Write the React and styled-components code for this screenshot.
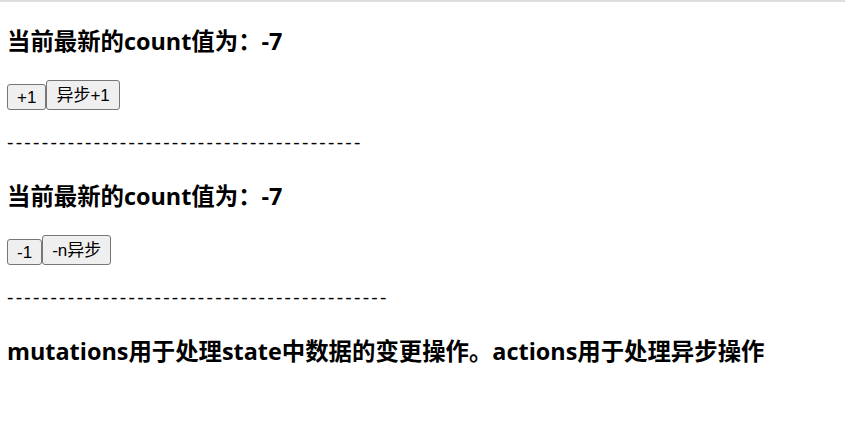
import React from "react";
import styled, { createGlobalStyle } from "styled-components";

const Global = createGlobalStyle`
  html, body { margin: 0; padding: 0; background: #fff; }
  body { font-family: "Open Sans", "Noto Sans CJK SC", sans-serif; color: #000; }
`;

const TopBar = styled.div`
  height: 2px;
  background: #dedee2;
`;

const Page = styled.main`
  padding: 24px 7px 0 7px;
  display: flex;
  flex-direction: column;
`;

const Section = styled.section`
  display: flex;
  flex-direction: column;
`;

const Title = styled.h3`
  margin: 0 0 24px 0;
  font-family: "Open Sans", "Noto Sans CJK SC", sans-serif;
  font-weight: 700;
  font-size: 23.4px;
  line-height: 30px;
  white-space: nowrap;
`;

const ButtonRow = styled.div`
  display: flex;
  align-items: flex-end;
  height: 30px;
  margin-bottom: 19px;
`;

const Button = styled.button`
  box-sizing: border-box;
  height: ${(p) => (p.$cjk ? 30 : 26)}px;
  padding: 0 9px;
  margin: 0;
  border: 1px solid #767676;
  border-radius: 3px;
  background: #efefef;
  color: #000;
  font-family: "Liberation Sans", "Noto Sans CJK SC", sans-serif;
  font-size: 17px;
  line-height: 1;
  white-space: nowrap;
  cursor: pointer;
`;

const Divider = styled.div`
  font-family: "Open Sans", sans-serif;
  font-size: 20px;
  line-height: 26px;
  letter-spacing: 2.24px;
  margin-bottom: 26px;
  white-space: nowrap;
  color: #000;
`;

function Counter({ count, buttons, dashes }) {
  return (
    <Section>
      <Title>当前最新的count值为：-{Math.abs(count)}</Title>
      <ButtonRow>
        {buttons.map((b) => (
          <Button key={b.label} $cjk={b.cjk}>
            {b.label}
          </Button>
        ))}
      </ButtonRow>
      <Divider>{"-".repeat(dashes)}</Divider>
    </Section>
  );
}

export default function App() {
  return (
    <>
      <Global />
      <TopBar />
      <Page>
        <Counter
          count={-7}
          dashes={41}
          buttons={[
            { label: "+1", cjk: false },
            { label: "异步+1", cjk: true },
          ]}
        />
        <Counter
          count={-7}
          dashes={44}
          buttons={[
            { label: "-1", cjk: false },
            { label: "-n异步", cjk: true },
          ]}
        />
        <Title>mutations用于处理state中数据的变更操作。actions用于处理异步操作</Title>
      </Page>
    </>
  );
}
